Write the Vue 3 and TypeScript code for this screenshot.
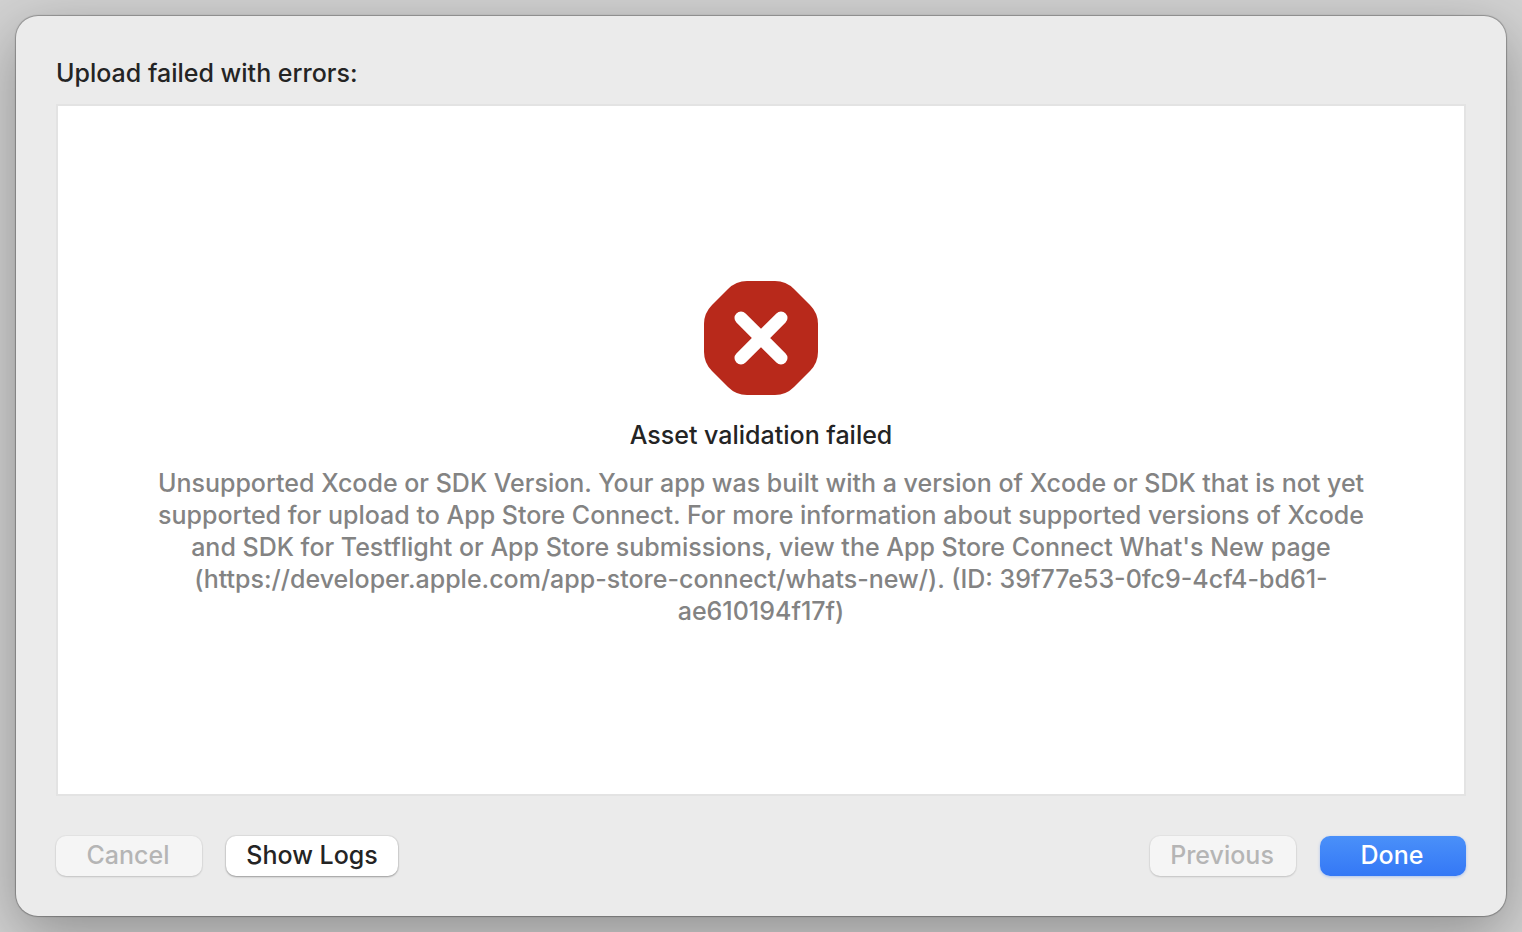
<script setup lang="ts">
const title: string = 'Asset validation failed'
const messageLines: string[] = [
  'Unsupported Xcode or SDK Version. Your app was built with a version of Xcode or SDK that is not yet',
  'supported for upload to App Store Connect. For more information about supported versions of Xcode',
  "and SDK for Testflight or App Store submissions, view the App Store Connect What's New page",
  '(https://developer.apple.com/app-store-connect/whats-new/). (ID: 39f77e53-0fc9-4cf4-bd61-',
  'ae610194f17f)',
]
</script>

<template>
  <div class="backdrop">
    <main class="dialog" role="dialog" aria-labelledby="heading">
      <h1 id="heading" class="heading">Upload failed with errors:</h1>
      <section class="panel">
        <svg class="icon" viewBox="0 0 114 114" aria-hidden="true">
          <path
            fill="#b8291b"
            d="M43 0H71Q82 0 90 8L106 24Q114 32 114 43V71Q114 82 106 90L90 106Q82 114 71 114H43Q32 114 24 106L8 90Q0 82 0 71V43Q0 32 8 24L24 8Q32 0 43 0Z"
          />
          <path d="M37 37L77 77M77 37L37 77" stroke="#fff" stroke-width="13" stroke-linecap="round" />
        </svg>
        <h2 class="title">{{ title }}</h2>
        <p class="message">
          <template v-for="(line, i) in messageLines" :key="i"><br v-if="i > 0" />{{ line }}</template>
        </p>
      </section>
      <footer class="actions">
        <button class="button" type="button" disabled>Cancel</button>
        <button class="button logs" type="button">Show Logs</button>
        <span class="spacer"></span>
        <button class="button" type="button" disabled>Previous</button>
        <button class="button primary" type="button">Done</button>
      </footer>
    </main>
  </div>
</template>

<style>
body {
  margin: 0;
}
</style>

<style scoped>
.backdrop {
  box-sizing: border-box;
  min-height: 100vh;
  padding: 16px;
  display: flex;
  overflow: hidden;
  background: #d2d2d2;
  font-family: Inter, 'Liberation Sans', sans-serif;
  font-size: 25px;
  font-weight: 450;
  line-height: 32px;
  color: #242424;
}
.dialog {
  box-sizing: border-box;
  flex: 1;
  min-width: 0;
  display: flex;
  flex-direction: column;
  padding: 41px 40px 40px;
  border-radius: 22px;
  background: #ebebeb;
  box-shadow:
    0 0 1px 1px rgba(0, 0, 0, 0.28),
    0 18px 60px rgba(0, 0, 0, 0.32);
}
.heading,
.title {
  margin: 0;
  font-size: 25px;
  line-height: 32px;
  font-weight: 450;
}
.panel {
  box-sizing: border-box;
  flex: 1;
  margin-top: 15px;
  padding: 8px 40px 0;
  display: flex;
  flex-direction: column;
  align-items: center;
  justify-content: center;
  border: 2px solid #e3e3e3;
  background: #fff;
  text-align: center;
}
.icon {
  width: 114px;
  height: 114px;
  fill: none;
}
.title {
  margin-top: 24px;
}
.message {
  margin: 16px 0 0;
  color: #838383;
}
.actions {
  display: flex;
  gap: 24px;
  margin-top: 40px;
}
.spacer {
  flex: 1;
}
.button {
  box-sizing: border-box;
  width: 146px;
  height: 40px;
  padding: 0 2px 2px 0;
  border: 0;
  border-radius: 10px;
  background: #fff;
  box-shadow:
    0 0 1px 1px rgba(0, 0, 0, 0.06),
    0 1px 2px rgba(0, 0, 0, 0.3);
  font: inherit;
  color: #242424;
}
.button.logs {
  width: 172px;
  padding-right: 0;
}
.button:disabled {
  background: #f5f5f5;
  color: #b5b5b5;
  box-shadow:
    0 0 1px 1px rgba(0, 0, 0, 0.03),
    0 1px 2px rgba(0, 0, 0, 0.15);
}
.button.primary {
  background: linear-gradient(#4a90f9, #3478f6);
  color: #fff;
  box-shadow: 0 1px 3px rgba(52, 120, 246, 0.35);
}
</style>
